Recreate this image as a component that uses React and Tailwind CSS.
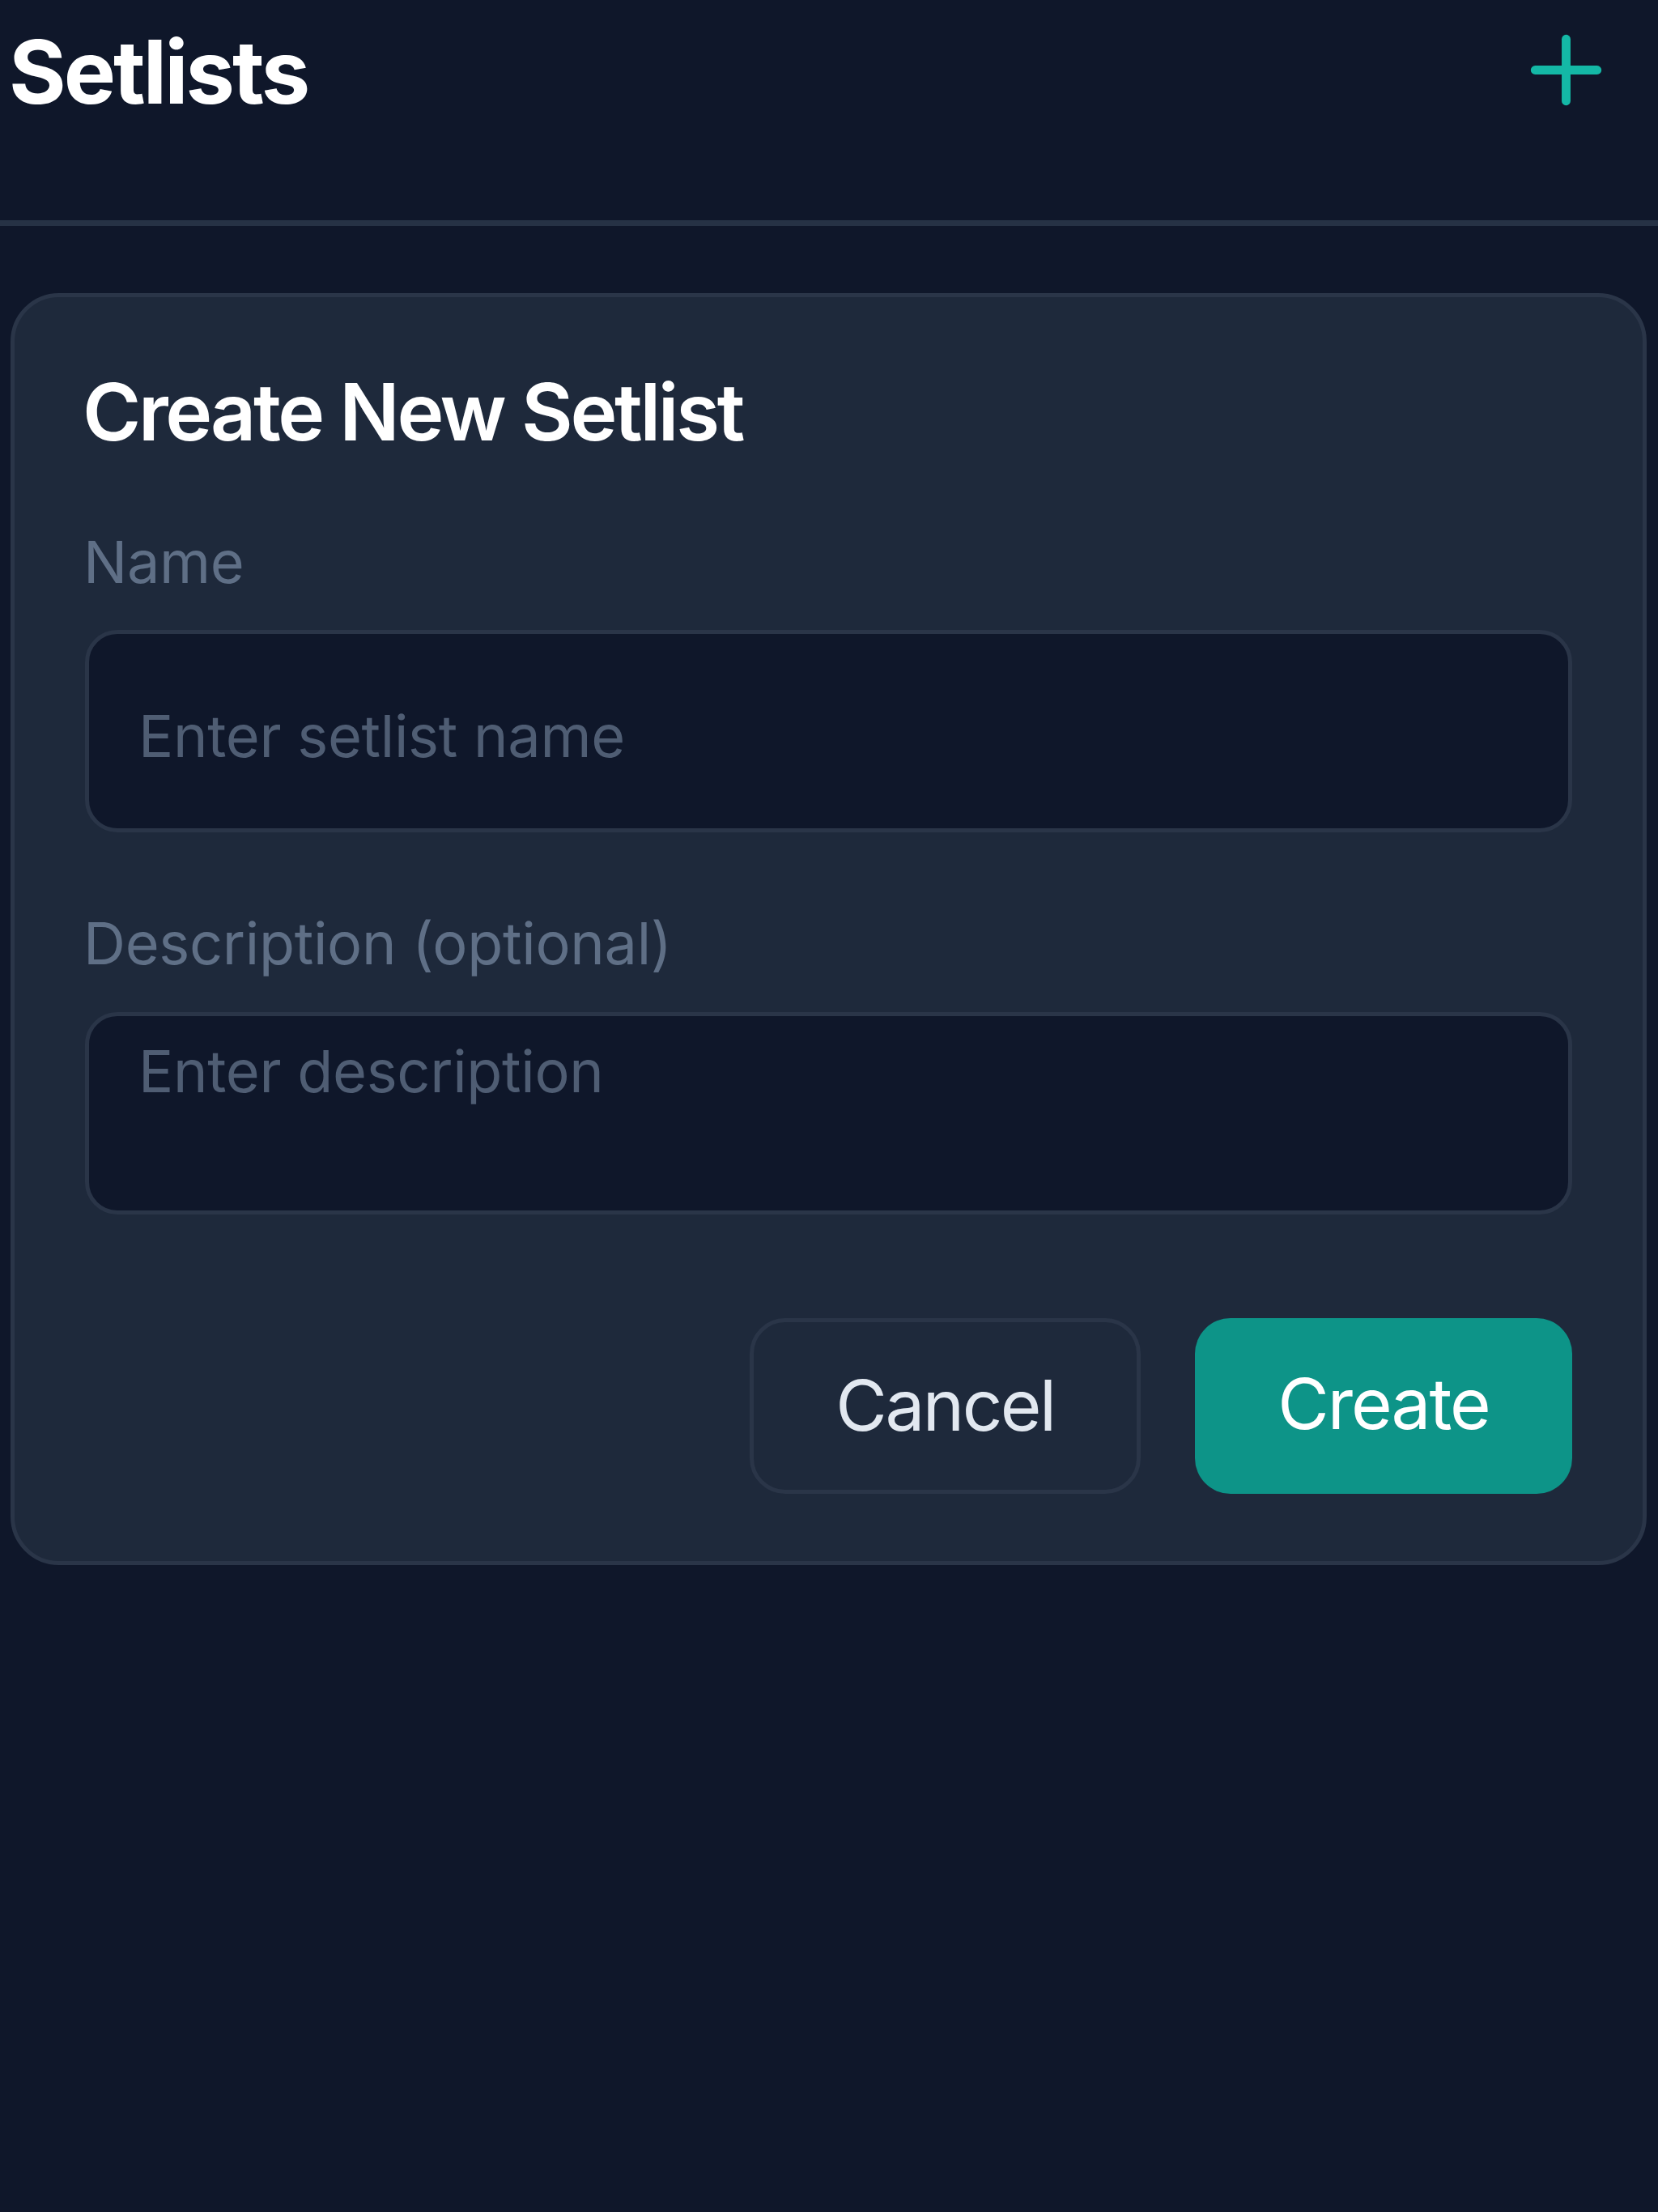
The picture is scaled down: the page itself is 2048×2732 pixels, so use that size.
import React from "react";
import { Plus } from "lucide-react";

export default function App() {
  return (
    <div
      className="w-full min-h-[2732px] bg-[#0f172a]"
      style={{ fontFamily: "Inter, 'Noto Sans', sans-serif" }}
    >
      {/* Header */}
      <div className="flex items-start justify-between h-[272px] pl-[11px] pr-[48px]">
        <h1 className="mt-[23px] text-[108px] leading-[132px] font-bold text-white tracking-[-3px]">
          Setlists
        </h1>
        <button className="mt-[21px] text-[#14b8a6]">
          <Plus size={131} strokeWidth={2} />
        </button>
      </div>
      <div className="h-[7px] bg-[#263245]" />

      {/* Card */}
      <div className="pt-[83px] pl-[13px] pr-[14px]">
        <div className="rounded-[60px] border-[5px] border-[#2a3548] bg-[#1e293b] px-[87px] pt-[83px] pb-[83px]">
          <h2 className="-ml-[3px] text-[98px] leading-[118px] font-semibold text-white tracking-[-3.3px] mb-[82px]">
            Create New Setlist
          </h2>

          <label className="block -ml-[2px] text-[72px] leading-[88px] tracking-[-0.3px] text-[#5f6f86] mb-[40px]">
            Name
          </label>
          <input
            type="text"
            placeholder="Enter setlist name"
            className="block w-full h-[250px] rounded-[40px] border-[5px] border-[#2a3548] bg-[#0f172a] pl-[61px] pr-[65px] pt-[81px] pb-[71px] text-[72px] leading-[88px] tracking-[-0.3px] text-white placeholder:text-[#4f5d73] outline-none"
          />

          <label className="block -ml-[2px] mt-[93px] text-[72px] leading-[88px] tracking-[-0.3px] text-[#5f6f86] mb-[41px]">
            Description (optional)
          </label>
          <textarea
            placeholder="Enter description"
            className="block w-full h-[250px] resize-none rounded-[40px] border-[5px] border-[#2a3548] bg-[#0f172a] pl-[61px] pr-[65px] pt-[24px] pb-[20px] text-[72px] leading-[88px] tracking-[-0.3px] text-white placeholder:text-[#4f5d73] outline-none"
          />

          <div className="flex justify-end gap-[67px] mt-[128px]">
            <button className="h-[217px] w-[483px] rounded-[44px] border-[5px] border-[#2a3548] text-[87px] font-normal tracking-[-2.5px] text-[#e2e8f0] flex items-center justify-center">
              Cancel
            </button>
            <button className="h-[217px] w-[466px] rounded-[44px] bg-[#0d9488] text-[87px] font-normal tracking-[-2px] text-white flex items-center justify-center pb-[4px]">
              Create
            </button>
          </div>
        </div>
      </div>
    </div>
  );
}
